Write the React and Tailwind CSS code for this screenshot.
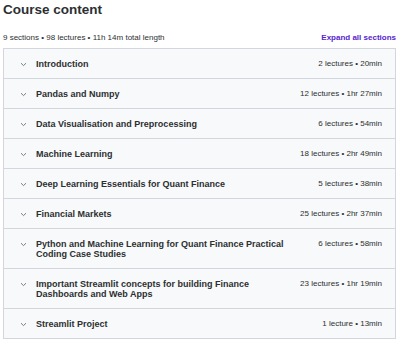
const sections = [
  { title: 'Introduction', meta: '2 lectures • 20min' },
  { title: 'Pandas and Numpy', meta: '12 lectures • 1hr 27min' },
  { title: 'Data Visualisation and Preprocessing', meta: '6 lectures • 54min' },
  { title: 'Machine Learning', meta: '18 lectures • 2hr 49min' },
  { title: 'Deep Learning Essentials for Quant Finance', meta: '5 lectures • 38min' },
  { title: 'Financial Markets', meta: '25 lectures • 2hr 37min' },
  { title: 'Python and Machine Learning for Quant Finance Practical Coding Case Studies', meta: '6 lectures • 58min' },
  { title: 'Important Streamlit concepts for building Finance Dashboards and Web Apps', meta: '23 lectures • 1hr 19min' },
  { title: 'Streamlit Project', meta: '1 lecture • 13min' },
]

function Chevron() {
  return (
    <svg width="7" height="5" viewBox="0 0 7 5" className="shrink-0 mt-[3px] text-[#6a6f73]">
      <path d="M1 1.2 L3.5 3.6 L6 1.2" fill="none" stroke="currentColor" strokeWidth="0.9" />
    </svg>
  )
}

function SectionRow({ title, meta }) {
  return (
    <div className="flex items-start bg-[#f7f9fa] border-t border-[#d1d7dc] first:border-t-0 pl-[16px] pr-[13px] pt-[10px] pb-[9px]">
      <Chevron />
      <p className="ml-[9px] w-[250px] text-[9px] leading-[10px] font-bold text-[#2d2f31]">
        {title}
      </p>
      <p className="ml-auto text-[8px] leading-[10px] text-[#2d2f31] whitespace-nowrap">{meta}</p>
    </div>
  )
}

export default function App() {
  return (
    <div className="bg-white w-[400px] h-[341px] px-[3px] pt-[1px]" style={{ fontFamily: "'Liberation Sans', Arial, sans-serif" }}>
      <h2 className="text-[13.5px] leading-[18px] font-bold text-[#2d2f31]">Course content</h2>
      <div className="flex items-center justify-between mt-[14px] mb-[5px]">
        <p className="text-[8px] leading-[10px] text-[#2d2f31]">9 sections • 98 lectures • 11h 14m total length</p>
        <button className="text-[8px] leading-[10px] font-bold text-[#5624d0] mr-[1px]">Expand all sections</button>
      </div>
      <div className="border border-[#d1d7dc] w-[393px]">
        {sections.map((s) => (
          <SectionRow key={s.title} title={s.title} meta={s.meta} />
        ))}
      </div>
    </div>
  )
}
